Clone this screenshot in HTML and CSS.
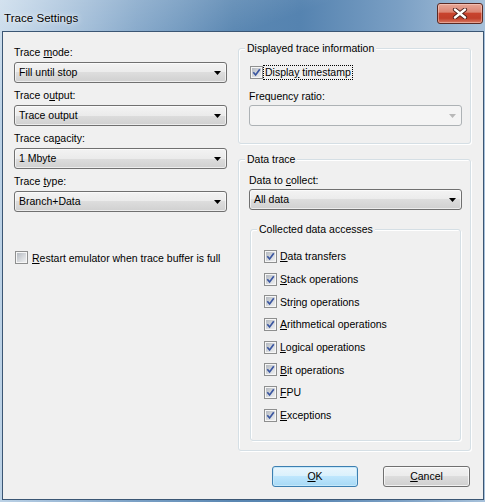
FILE: index.html
```html
<!DOCTYPE html>
<html>
<head>
<meta charset="utf-8">
<title>Trace Settings</title>
<link rel="stylesheet" href="styles.css">
</head>
<body>
<div class="window">
  <div class="titlebar">
    <span class="title">Trace Settings</span>
    <div class="close">
      <svg width="16" height="11" viewBox="0 0 16 11">
        <path d="M3 1.5 L13 9.5 M13 1.5 L3 9.5" stroke="#4a1c18" stroke-width="4.2" stroke-linecap="round" fill="none"/>
        <path d="M3 1.5 L13 9.5 M13 1.5 L3 9.5" stroke="#ffffff" stroke-width="2.4" stroke-linecap="round" fill="none"/>
      </svg>
    </div>
  </div>
  <div class="client">
    <div class="columns">
      <div class="left">
        <div class="field">
          <div class="lbl">Trace <u>m</u>ode:</div>
          <div class="combo"><span>Fill until stop</span><svg class="arrow" width="7" height="4" viewBox="0 0 7 4"><path d="M0 0H7L3.5 4Z"/></svg></div>
        </div>
        <div class="field">
          <div class="lbl">Trace o<u>u</u>tput:</div>
          <div class="combo"><span>Trace output</span><svg class="arrow" width="7" height="4" viewBox="0 0 7 4"><path d="M0 0H7L3.5 4Z"/></svg></div>
        </div>
        <div class="field">
          <div class="lbl">Trace ca<u>p</u>acity:</div>
          <div class="combo"><span>1 Mbyte</span><svg class="arrow" width="7" height="4" viewBox="0 0 7 4"><path d="M0 0H7L3.5 4Z"/></svg></div>
        </div>
        <div class="field">
          <div class="lbl">Trace <u>t</u>ype:</div>
          <div class="combo"><span>Branch+Data</span><svg class="arrow" width="7" height="4" viewBox="0 0 7 4"><path d="M0 0H7L3.5 4Z"/></svg></div>
        </div>
        <div class="check restart">
          <span class="cb"><span class="ck"></span></span>
          <span class="ctext"><u>R</u>estart emulator when trace buffer is full</span>
        </div>
      </div>
      <div class="right">
        <fieldset class="group g1">
          <legend>Displayed trace information</legend>
          <div class="check ts">
            <span class="cb"><svg class="ck" width="9" height="9" viewBox="0 0 9 9"><path d="M1.3 4.3 L3.6 7 L7.8 1.2"/></svg></span>
            <span class="focus">Displa<u>y</u> timestamp</span>
          </div>
          <div class="lbl freq">Frequency ratio:</div>
          <div class="combo disabled"><span></span><svg class="arrow" width="7" height="4" viewBox="0 0 7 4"><path d="M0 0H7L3.5 4Z"/></svg></div>
        </fieldset>
        <fieldset class="group g2">
          <legend>Data trace</legend>
          <div class="lbl collect">Data to <u>c</u>ollect:</div>
          <div class="combo"><span>All data</span><svg class="arrow" width="7" height="4" viewBox="0 0 7 4"><path d="M0 0H7L3.5 4Z"/></svg></div>
          <fieldset class="group g3">
            <legend>Collected data accesses</legend>
            <div class="list">
              <div class="check row"><span class="cb"><svg class="ck" width="9" height="9" viewBox="0 0 9 9"><path d="M1.3 4.3 L3.6 7 L7.8 1.2"/></svg></span><span class="ctext"><u>D</u>ata transfers</span></div>
              <div class="check row"><span class="cb"><svg class="ck" width="9" height="9" viewBox="0 0 9 9"><path d="M1.3 4.3 L3.6 7 L7.8 1.2"/></svg></span><span class="ctext"><u>S</u>tack operations</span></div>
              <div class="check row"><span class="cb"><svg class="ck" width="9" height="9" viewBox="0 0 9 9"><path d="M1.3 4.3 L3.6 7 L7.8 1.2"/></svg></span><span class="ctext">Str<u>i</u>ng operations</span></div>
              <div class="check row"><span class="cb"><svg class="ck" width="9" height="9" viewBox="0 0 9 9"><path d="M1.3 4.3 L3.6 7 L7.8 1.2"/></svg></span><span class="ctext"><u>A</u>rithmetical operations</span></div>
              <div class="check row"><span class="cb"><svg class="ck" width="9" height="9" viewBox="0 0 9 9"><path d="M1.3 4.3 L3.6 7 L7.8 1.2"/></svg></span><span class="ctext"><u>L</u>ogical operations</span></div>
              <div class="check row"><span class="cb"><svg class="ck" width="9" height="9" viewBox="0 0 9 9"><path d="M1.3 4.3 L3.6 7 L7.8 1.2"/></svg></span><span class="ctext"><u>B</u>it operations</span></div>
              <div class="check row"><span class="cb"><svg class="ck" width="9" height="9" viewBox="0 0 9 9"><path d="M1.3 4.3 L3.6 7 L7.8 1.2"/></svg></span><span class="ctext"><u>F</u>PU</span></div>
              <div class="check row"><span class="cb"><svg class="ck" width="9" height="9" viewBox="0 0 9 9"><path d="M1.3 4.3 L3.6 7 L7.8 1.2"/></svg></span><span class="ctext"><u>E</u>xceptions</span></div>
            </div>
          </fieldset>
        </fieldset>
      </div>
    </div>
    <div class="buttons">
      <button class="btn default"><u>O</u>K</button>
      <button class="btn cancel"><u>C</u>ancel</button>
    </div>
  </div>
</div>
</body>
</html>
```

FILE: styles.css
```css
html, body {
  margin: 0;
  padding: 0;
  background: #ffffff;
}

body {
  font-family: "Liberation Sans", Arial, sans-serif;
  font-size: 10.5px;
  color: #000;
}

.window {
  width: 485px;
  height: 502px;
  box-sizing: border-box;
  padding: 0 1px 2px 2px;
  display: flex;
  flex-direction: column;
  background:
    linear-gradient(160deg, rgba(255,255,255,0.35) 0%, rgba(255,255,255,0) 18%),
    linear-gradient(to right, #bcd2e6 0%, #a3bfda 10%, #7aa0c5 28%, #5a87b2 48%, #5583b0 62%, #7a9fc4 82%, #a7c1da 100%);
}

.titlebar {
  height: 31px;
  flex: none;
  display: flex;
  justify-content: space-between;
  align-items: flex-start;
}

.title {
  margin: 11px 0 0 2px;
  font-size: 11.6px;
  line-height: 14px;
  color: #000;
  text-shadow: 0 0 6px rgba(255,255,255,0.9), 0 0 2px rgba(255,255,255,0.7);
}

.close {
  margin: 3px 1px 0 0;
  width: 46px;
  height: 21px;
  box-sizing: border-box;
  border: 1px solid #5a2a24;
  border-radius: 3px;
  background: linear-gradient(#e7a797 0%, #dc8674 42%, #c8432d 50%, #c13f2a 75%, #d77a63 100%);
  box-shadow: inset 0 0 0 1px rgba(255,220,210,0.45);
  display: flex;
  align-items: center;
  justify-content: center;
}

.client {
  flex: 1;
  background: #f0f0f0;
  border: 1px solid #3b5674;
  display: flex;
  flex-direction: column;
  padding: 9px 12px 12px 11px;
}

.columns {
  display: flex;
  align-items: flex-start;
  gap: 11px;
}

.left {
  width: 213px;
  margin-top: 4px;
  display: flex;
  flex-direction: column;
}

.right {
  width: 233px;
  display: flex;
  flex-direction: column;
}

.field + .field {
  margin-top: 5px;
}

.lbl {
  height: 14px;
  line-height: 14px;
  white-space: nowrap;
}

.combo {
  margin-top: 3px;
  height: 21px;
  box-sizing: border-box;
  border: 1px solid #707070;
  border-radius: 3px;
  background: linear-gradient(#f3f3f3 0%, #ebebeb 50%, #dddddd 50%, #d0d0d0 100%);
  box-shadow: inset 0 0 0 1px rgba(255,255,255,0.6);
  display: flex;
  align-items: center;
  justify-content: space-between;
  padding: 0 5px 0 4px;
  line-height: 19px;
  white-space: nowrap;
}

.arrow path {
  fill: #000;
}

.combo.disabled {
  border-color: #adb2b5;
  background: #f4f4f4;
  box-shadow: none;
}

.combo.disabled .arrow path {
  fill: #b8b8b8;
}

.check {
  display: flex;
  align-items: center;
  white-space: nowrap;
}

.cb {
  width: 13px;
  height: 13px;
  box-sizing: border-box;
  border: 1px solid #8e8f8f;
  background: #f6f6f6;
  padding: 1px;
  flex: none;
  display: flex;
}

.ck {
  display: block;
  width: 9px;
  height: 9px;
  box-sizing: border-box;
  background: linear-gradient(135deg, #b4b9c0 0%, #d6d9dd 55%, #eeeff0 100%);
  border: 0;
}

.ck path {
  fill: none;
  stroke: #3a56a0;
  stroke-width: 1.7;
  stroke-linejoin: miter;
}

.restart {
  margin-top: 38px;
  margin-left: 1px;
  height: 15px;
}

.restart .ctext {
  margin-left: 4px;
}

.group {
  margin: 0;
  min-width: 0;
  border: 1px solid #d5dfe5;
  border-radius: 3px;
  box-shadow: inset 1px 1px 0 #ffffff, 1px 1px 0 #ffffff;
}

.group legend {
  padding: 0 2px;
  line-height: 14px;
  height: 14px;
  background: #f0f0f0;
}

.g1 {
  padding: 0 8px 17px 10px;
}

.g1 legend,
.g2 legend {
  margin-left: -4px;
}

.ts {
  margin-top: 10px;
  margin-left: 1px;
  height: 15px;
}

.focus {
  display: inline-block;
  margin-left: 1px;
  padding: 0 1px;
  line-height: 13px;
  outline: 1px dotted #000;
  outline-offset: 0;
}

.freq {
  margin-top: 9px;
}

.g1 .combo {
  margin-top: 2px;
}

.g2 {
  margin-top: 8px;
  padding: 0 8px 9px 10px;
}

.collect {
  margin-top: 7px;
}

.g2 > .combo {
  margin-top: 2px;
}

.g3 {
  margin: 12px 1px 0 1px;
  padding: 0 0 13px 13px;
}

.g3 legend {
  margin-left: -7px;
}

.list {
  margin-top: 9px;
  display: flex;
  flex-direction: column;
}

.row {
  height: 22.7px;
}

.row .ctext {
  margin-left: 3px;
}

.buttons {
  margin-top: auto;
  margin-right: 1px;
  display: flex;
  justify-content: flex-end;
  gap: 25px;
}

.btn {
  height: 21px;
  box-sizing: border-box;
  border: 1px solid #707070;
  border-radius: 3px;
  background: linear-gradient(#f2f2f2 0%, #ebebeb 50%, #dddddd 50%, #cfcfcf 100%);
  box-shadow: inset 0 0 0 1px rgba(255,255,255,0.7);
  font-family: "Liberation Sans", Arial, sans-serif;
  font-size: 10.5px;
  color: #000;
  padding: 0;
  line-height: 19px;
}

.btn.default {
  width: 86px;
  border-color: #3c7fb1;
  background: linear-gradient(#eaf6fd 0%, #d9f0fc 50%, #bee6fd 50%, #a7d9f5 100%);
  box-shadow: inset 0 0 0 1px #c6e8fa;
}

.btn.cancel {
  width: 87px;
}
```
